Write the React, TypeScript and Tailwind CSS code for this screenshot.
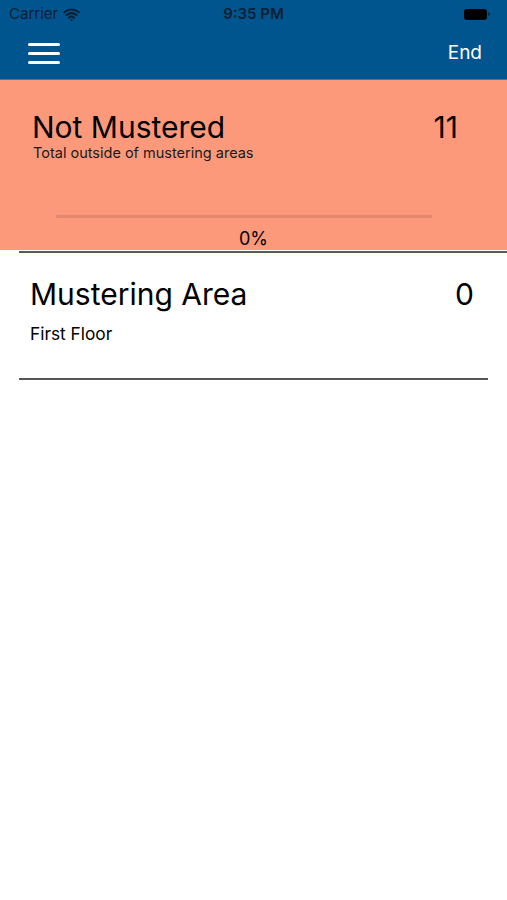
import { Wifi } from "lucide-react";

const font = { fontFamily: 'Inter, "Liberation Sans", sans-serif' };

export default function App() {
  return (
    <div className="w-[507px] h-[900px] bg-white overflow-hidden" style={font}>
      {/* Status + nav bar */}
      <div className="bg-[#00558f] h-[79px] flex flex-col">
        <div className="h-[28px] flex items-center justify-between px-[9px] text-[#0a1f33]">
          <div className="flex items-center gap-[5px] w-[120px]">
            <span className="text-[15px]">Carrier</span>
            <Wifi size={17} strokeWidth={3} />
          </div>
          <span className="text-[15px] font-semibold">9:35 PM</span>
          <div className="w-[120px] flex justify-end pr-[8px]">
            <div className="flex items-center">
              <div className="w-[23px] h-[11px] rounded-[3px] bg-black" />
              <div className="w-[2px] h-[4px] bg-black/40 rounded-r-sm ml-[1px]" />
            </div>
          </div>
        </div>
        <div className="flex-1 flex items-center justify-between pl-[28px] pr-[25px] pb-[1px]">
          <div className="flex flex-col gap-[6px] w-[32px]">
            <div className="h-[3px] bg-white rounded-sm" />
            <div className="h-[3px] bg-white rounded-sm" />
            <div className="h-[3px] bg-white rounded-sm" />
          </div>
          <span className="text-white text-[19px]">End</span>
        </div>
      </div>
      <div className="h-px bg-[#6b6b6b]" />

      {/* Not mustered */}
      <div className="bg-[#fd997b] h-[170px] flex flex-col">
        <div className="flex justify-between pl-[32px] pr-[49px] pt-[29px]">
          <div className="flex flex-col">
            <span className="text-[30px] leading-[36px] text-black">Not Mustered</span>
            <span className="text-[14.5px] leading-[16px] text-[#1a1a1a] pl-px">Total outside of mustering areas</span>
          </div>
          <span className="text-[30px] leading-[36px] text-black">11</span>
        </div>
        <div className="ml-[56px] mr-[75px] mt-[54px] h-[3px] bg-[#e0896f]" />
        <div className="text-center text-[18px] leading-[22px] text-black mt-[10px]">0%</div>
      </div>
      <div className="h-px bg-white" />
      <div className="ml-[19px] h-[2px] bg-[#5a5a5a]" />

      {/* Mustering area */}
      <div className="mx-[19px] border-b-2 border-[#555] pt-[23px] pb-[34px]">
        <div className="flex justify-between pl-[11px] pr-[14px]">
          <span className="text-[30px] leading-[36px] text-black">Mustering Area</span>
          <span className="text-[30px] leading-[36px] text-black">0</span>
        </div>
        <div className="pl-[11px] mt-[12px] text-[17.3px] leading-[20px] text-black">First Floor</div>
      </div>
    </div>
  );
}
